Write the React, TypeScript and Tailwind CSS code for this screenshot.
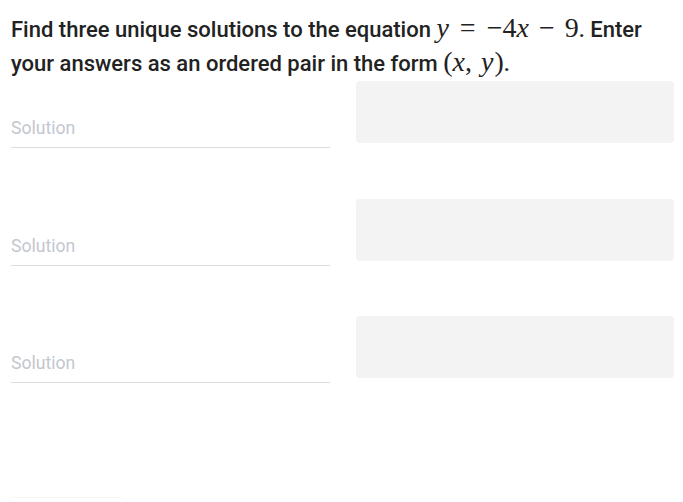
import React from 'react';

const M = ({ children }: { children: React.ReactNode }) => (
    <span className="font-['Liberation_Serif',serif] italic text-[28px] font-normal leading-none">{children}</span>
);
const N = ({ children }: { children: React.ReactNode }) => (
    <span className="font-['Liberation_Serif',serif] text-[28px] font-normal leading-none">{children}</span>
);

const SolutionRow: React.FC = () => (
    <div className="flex gap-[26px] h-[62px] items-start">
        <div className="w-[319px] pt-[28px]">
            <input
                placeholder="Solution"
                className="w-full h-[39px] border-b border-[#dcdcdc] outline-none text-[17.6px] text-[#333] placeholder:text-[#c3c7cf] bg-transparent"
            />
        </div>
        <div className="w-[318px] h-[62px] rounded-[4px] bg-[#f3f3f3]" />
    </div>
);

export default function App() {
    return (
        <div className="h-[502px] bg-white pl-[11px] pt-[13px] font-['Roboto',sans-serif] overflow-hidden">
            <p className="text-[22px] font-medium leading-[34px] text-[#222] w-[650px]">
                Find three unique solutions to the equation <M>y</M>
                <N>
                    <span className="ml-[11px] mr-[11px]">=</span>−4
                </N>
                <M>x</M>
                <N>
                    <span className="ml-[10px] mr-[10px]">−</span>9
                </N>
                . Enter your answers as an ordered pair in the form <N>(</N><M>x</M><N>,<span className="ml-[9px]" /></N><M>y</M><N><span className="ml-[1px]">)</span></N>.
            </p>
            <div className="flex flex-col gap-[55.5px]">
                <SolutionRow />
                <SolutionRow />
                <SolutionRow />
            </div>
            <div className="mt-[120px] ml-[-3px] w-[117px] h-10 rounded bg-white shadow-[0_-1px_2px_rgba(0,0,0,0.04)]" />
        </div>
    );
}
